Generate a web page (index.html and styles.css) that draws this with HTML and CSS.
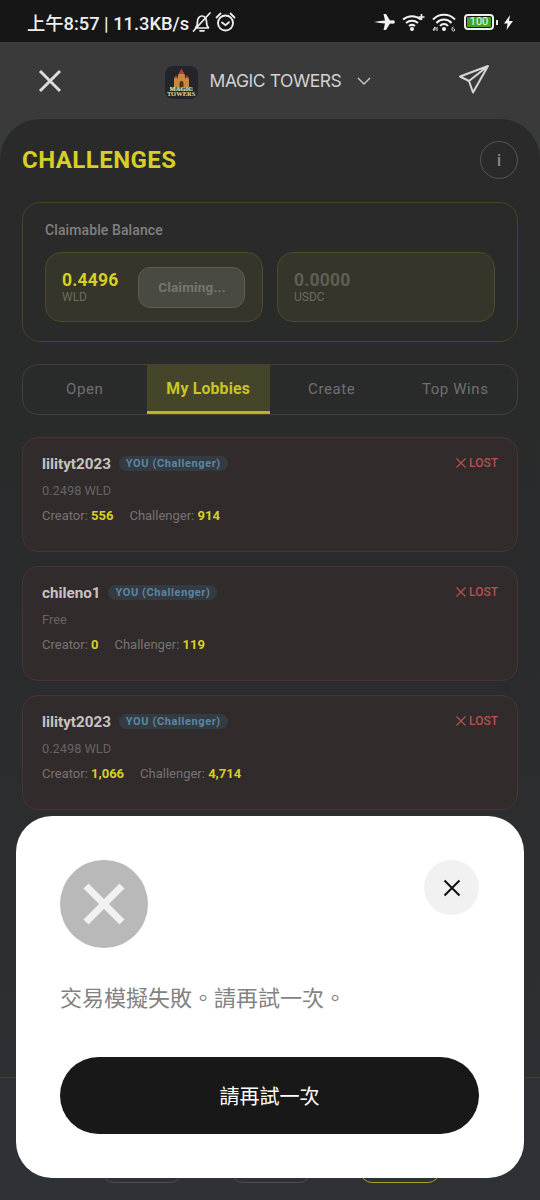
FILE: index.html
```html
<!DOCTYPE html>
<html lang="zh-Hant">
<head>
<meta charset="utf-8">
<title>Magic Towers</title>
<link rel="stylesheet" href="styles.css">
</head>
<body>
<div class="screen">
  <div class="status">
    <div class="status-left">
      <span class="clock">上午8:57 | 11.3KB/s</span>
      <svg class="st-ic" width="20" height="22" viewBox="0 0 20 22"><path d="M3.500 17c1.700-1.500 2-3 2-6.500 0-3 2-5.500 4.500-5.500s4.500 2.500 4.500 5.500c0 3.500.3 5 2 6.500zM8 19.800h4M1.500 20 18 2" fill="none" stroke="#eee" stroke-width="1.700" stroke-linecap="round" stroke-linejoin="round"/></svg>
      <svg class="st-ic" width="21" height="22" viewBox="0 0 21 22"><circle cx="10.500" cy="12" r="7.500" fill="none" stroke="#eee" stroke-width="1.900"/><path d="M7 11.500l3.500 2.700 3.500-3M1.500 6.500 5.500 2.500M19.500 6.500l-4-4" fill="none" stroke="#eee" stroke-width="1.800" stroke-linecap="round"/></svg>
    </div>
    <div class="status-right">
      <svg class="sr-plane" width="21" height="18" viewBox="0 0 21 18"><path d="M0 9 6 8l5-.5L9.500 1h2.500l4 6.500 3-.2c1.200 0 1.800.7 1.800 1.700s-.6 1.700-1.800 1.700l-3-.2-4 6.500H9.500L11 10.500 6 10z" fill="#f2f2f2"/></svg>
      <svg width="24" height="19" viewBox="0 0 24 19"><path d="M1 6.500a14 14 0 0 1 18 0M4 10a9.500 9.500 0 0 1 12 0M7 13a5 5 0 0 1 6 0" fill="none" stroke="#f2f2f2" stroke-width="2"/><circle cx="10" cy="16" r="2" fill="#f2f2f2"/><path d="M19.500 1v6M16.500 4h6" stroke="#f2f2f2" stroke-width="1.600"/></svg>
      <svg width="24" height="19" viewBox="0 0 24 19"><path d="M1 6.500a15 15 0 0 1 22 0M4.500 10a10 10 0 0 1 15 0M8 13a5 5 0 0 1 8 0" fill="none" stroke="#f2f2f2" stroke-width="2"/><circle cx="12" cy="16" r="2" fill="#f2f2f2"/><path d="M1 17l2-3v3zM5 14v4" stroke="#f2f2f2" stroke-width="1"/><path d="M21.500 14c-1 0-1.500.8-1.500 2s.5 2 1.500 2 1.200-.6 1.200-1.200-.5-1.100-1.200-1.100" fill="none" stroke="#f2f2f2" stroke-width="1"/></svg>
      <div class="battery"><div class="battery-fill">100</div></div>
      <div class="battery-nub"></div>
      <svg width="9" height="15" viewBox="0 0 9 15"><path d="M6 0 0 8.500h3.500L2.500 15 9 6H5z" fill="#f2f2f2"/></svg>
    </div>
  </div>

  <header class="topbar">
    <svg class="top-close" width="24" height="24" viewBox="0 0 24 24"><path d="M2 2l20 20M22 2 2 22" stroke="#dcdcdc" stroke-width="3" fill="none"/></svg>
    <div class="app">
      <div class="app-logo">
        <svg width="33" height="33" viewBox="0 0 33 33"><rect width="33" height="33" rx="8" fill="#23252b"/><path d="M5 22c4-3 19-3 23 0v3H5z" fill="#3f6f68"/><path d="M9 21v-8l2-3 2 3V9l3.500-5L20 9v4l2-3 2 3v8z" fill="#c78a3c"/><path d="M14.500 21v-4a2 2 0 0 1 4 0v4z" fill="#5b2d1f"/><path d="M16.500 2.500 13.500 8h6zM11 9l-2 3h4zM22 9l-2 3h4z" fill="#b13f33"/></svg>
        <span class="logo-t1">MAGIC</span><span class="logo-t2">TOWERS</span>
      </div>
      <span class="app-name">MAGIC TOWERS</span>
      <svg width="14" height="8" viewBox="0 0 14 8"><path d="M1 1l6 6 6-6" fill="none" stroke="#c8c8c8" stroke-width="1.400"/></svg>
    </div>
    <svg class="top-send" width="32" height="30" viewBox="0 0 32 30"><path d="M30 2 2 12.500l9 4.500 4 11.500zM30 2 11 17" fill="none" stroke="#d6d6d6" stroke-width="2" stroke-linejoin="round"/></svg>
  </header>

  <main class="panel">
    <div class="title-row">
      <h1 class="title">CHALLENGES</h1>
      <div class="info">i</div>
    </div>

    <section class="balance">
      <div class="balance-label">Claimable Balance</div>
      <div class="balance-row">
        <div class="token">
          <div class="token-text">
            <div class="amount">0.4496</div>
            <div class="unit">WLD</div>
          </div>
          <div class="claiming">Claiming...</div>
        </div>
        <div class="token">
          <div class="token-text">
            <div class="amount amount-zero">0.0000</div>
            <div class="unit">USDC</div>
          </div>
        </div>
      </div>
    </section>

    <nav class="tabs">
      <div class="tab">Open</div>
      <div class="tab tab-active">My Lobbies</div>
      <div class="tab">Create</div>
      <div class="tab">Top Wins</div>
    </nav>

    <div class="lobbies">
      <article class="lobby">
        <div class="lobby-head">
          <span class="lobby-name">lilityt2023</span>
          <span class="you">YOU (Challenger)</span>
          <span class="lost"><svg width="10" height="10" viewBox="0 0 10 10"><path d="M.5.500l9 9M9.500.500l-9 9" stroke="#b8504e" stroke-width="1.200"/></svg>LOST</span>
        </div>
        <div class="stake">0.2498 WLD</div>
        <div class="scores"><span>Creator: <b>556</b></span><span>Challenger: <b>914</b></span></div>
      </article>
      <article class="lobby">
        <div class="lobby-head">
          <span class="lobby-name">chileno1</span>
          <span class="you">YOU (Challenger)</span>
          <span class="lost"><svg width="10" height="10" viewBox="0 0 10 10"><path d="M.5.500l9 9M9.500.500l-9 9" stroke="#b8504e" stroke-width="1.200"/></svg>LOST</span>
        </div>
        <div class="stake">Free</div>
        <div class="scores"><span>Creator: <b>0</b></span><span>Challenger: <b>119</b></span></div>
      </article>
      <article class="lobby">
        <div class="lobby-head">
          <span class="lobby-name">lilityt2023</span>
          <span class="you">YOU (Challenger)</span>
          <span class="lost"><svg width="10" height="10" viewBox="0 0 10 10"><path d="M.5.500l9 9M9.500.500l-9 9" stroke="#b8504e" stroke-width="1.200"/></svg>LOST</span>
        </div>
        <div class="stake">0.2498 WLD</div>
        <div class="scores"><span>Creator: <b>1,066</b></span><span>Challenger: <b>4,714</b></span></div>
      </article>
    </div>

    <div class="bottom-nav">
      <div class="nav-pill"></div>
      <div class="nav-pill"></div>
      <div class="nav-pill nav-pill-on"></div>
    </div>
  </main>

  <div class="modal">
    <div class="modal-top">
      <div class="fail-icon"><svg width="44" height="44" viewBox="0 0 44 44"><path d="M4 4l36 36M40 4 4 40" stroke="#f1f1f1" stroke-width="7" fill="none"/></svg></div>
      <div class="modal-close"><svg width="18" height="18" viewBox="0 0 18 18"><path d="M1.500 1.500l15 15M16.500 1.500l-15 15" stroke="#111" stroke-width="2" fill="none"/></svg></div>
    </div>
    <p class="modal-text">交易模擬失敗。請再試一次。</p>
    <div class="modal-btn">請再試一次</div>
  </div>
</div>
</body>
</html>
```
FILE: styles.css
```css
* { box-sizing: border-box; margin: 0; padding: 0; }
html, body { width: 540px; height: 1200px; overflow: hidden; background: #161616; }
body { font-family: Roboto, "Noto Sans CJK TC", sans-serif; }
.screen { position: relative; width: 540px; height: 1200px; display: flex; flex-direction: column; overflow: hidden; background: #393a3a; }

.status { height: 42px; flex: none; background: #161616; display: flex; justify-content: space-between; align-items: center; padding: 2px 27px 0 27px; }
.status-left { display: flex; align-items: center; gap: 3px; }
.clock { font-family: Roboto, "Noto Sans CJK TC", sans-serif; font-size: 18.300px; font-weight: 500; color: #eeeeee; }
.st-ic { display: block; }
.status-right { display: flex; align-items: center; gap: 6px; }
.sr-plane { margin-right: 1px; }
.battery { width: 30px; height: 16px; border: 2px solid #f0f0f0; border-radius: 4px; padding: 1px; margin-left: 2px; }
.battery-fill { height: 100%; background: #46a51c; border-radius: 1px; color: #f4f4f4; font-size: 11px; line-height: 10px; text-align: center; }
.battery-nub { width: 2px; height: 5px; background: #e8e8e8; margin-left: -4px; margin-right: 0; }

.topbar { height: 77px; flex: none; display: flex; align-items: center; justify-content: space-between; padding: 0 50px 0 38px; background: #3a3a3a; }
.top-close { display: block; }
.top-send { display: block; margin-top: -4px; }
.app { display: flex; align-items: center; gap: 12px; margin-left: 16px; }
.app-logo { position: relative; width: 33px; height: 33px; margin-top: 3px; }
.app-logo svg { display: block; }
.logo-t1, .logo-t2 { position: absolute; left: 0; width: 33px; text-align: center; font-family: "Liberation Serif", serif; font-size: 6.500px; line-height: 6px; font-weight: 700; color: #e9d9a0; }
.logo-t1 { top: 20px; }
.logo-t2 { top: 25px; }
.app-name { font-family: Inter, sans-serif; font-size: 17.500px; letter-spacing: -0.45px; color: #d2d2d2; margin-right: 4px; }

.panel { position: relative; flex: 1; min-height: 0; padding: 0 22px; border-radius: 40px 40px 0 0; background: linear-gradient(180deg, #2a2a2a 0, #2a2b2c 50%, #2e3236 100%); }
.title-row { display: flex; align-items: center; justify-content: space-between; height: 83px; padding-bottom: 1px; }
.title { font-size: 24px; font-weight: 700; color: #d8ce26; letter-spacing: 0.45px; }
.info { width: 38px; height: 38px; border: 1px solid #555; border-radius: 50%; display: flex; align-items: center; justify-content: center; color: #8a8a8a; font-size: 16px; font-weight: 500; }

.balance { height: 140px; border: 1px solid #45452a; border-radius: 18px; padding: 19px 22px 0; }
.balance-label { font-size: 14px; font-weight: 500; letter-spacing: 0.1px; color: #808080; line-height: 17px; }
.balance-row { display: grid; grid-template-columns: 1fr 1fr; gap: 14px; margin-top: 13px; }
.token { height: 70px; border: 1px solid #4b4b2e; border-radius: 16px; background: #353529; display: flex; align-items: center; padding: 0 16px; gap: 20px; }
.amount { font-size: 17.500px; font-weight: 700; color: #d6d024; line-height: 20px; letter-spacing: 0.2px; }
.amount-zero { color: #5f5f56; }
.unit { font-size: 12px; color: #6b6b62; line-height: 15px; }
.claiming { width: 107px; height: 41px; border: 1px solid #5c5d4c; border-radius: 12px; background: #494a42; color: #767670; font-size: 13.500px; font-weight: 700; letter-spacing: 0.2px; display: flex; align-items: center; justify-content: center; }

.tabs { margin-top: 22px; height: 51px; border: 1px solid #414233; border-radius: 16px; display: grid; grid-template-columns: repeat(4, 1fr); overflow: hidden; }
.tab { display: flex; align-items: center; justify-content: center; font-size: 15px; letter-spacing: 0.6px; color: #707070; padding-bottom: 2px; }
.tab-active { background: #45452a; color: #c9c524; font-size: 15.800px; font-weight: 700; letter-spacing: 0.2px; border-bottom: 3px solid #b9b422; padding-bottom: 0; }

.lobbies { margin-top: 22px; display: flex; flex-direction: column; gap: 14px; }
.lobby { height: 115px; border: 1px solid #4a3434; border-radius: 16px; background: #322b2b; padding: 14px 19px 0; }
.lobby-head { display: flex; align-items: center; gap: 8px; height: 23px; }
.lobby-name { font-size: 15.200px; font-weight: 700; color: #c4c4c4; }
.you { height: 15px; padding: 0 7px; border-radius: 8px; background: #343b42; color: #5b86a4; font-size: 11px; font-weight: 700; letter-spacing: 0.6px; line-height: 15px; }
.lost { margin-left: auto; margin-bottom: 2px; display: flex; align-items: center; gap: 3px; color: #b8504e; font-size: 12px; font-weight: 500; }
.lost svg { display: block; }
.stake { margin-top: 8px; font-size: 12.800px; color: #656565; line-height: 16px; }
.scores { margin-top: 8px; display: flex; gap: 16px; font-size: 13px; color: #747474; line-height: 17px; }
.scores b { color: #d6d024; font-weight: 700; }

.bottom-nav { position: absolute; left: 0; right: 0; bottom: 0; height: 123px; border-top: 1px solid #414233; background: #2e3236; display: flex; justify-content: center; align-items: flex-end; gap: 49px; padding: 0 0 17px 2px; }
.nav-pill { width: 80px; height: 40px; border: 1px solid #4c4f50; border-radius: 12px; }
.nav-pill-on { border: 1.500px solid #a5a02a; }

.modal { position: absolute; left: 16px; top: 816px; width: 507.500px; height: 362px; border-radius: 36px; background: #ffffff; padding: 44px 44.500px 44px 44px; }
.modal-top { display: flex; justify-content: space-between; align-items: flex-start; }
.fail-icon { width: 88px; height: 88px; border-radius: 50%; background: #b9b9b9; display: flex; align-items: center; justify-content: center; }
.fail-icon svg, .modal-close svg { display: block; }
.modal-close { width: 55px; height: 55px; border-radius: 50%; background: #f1f1f1; display: flex; align-items: center; justify-content: center; }
.modal-text { margin-top: 32px; font-family: "Noto Sans CJK TC", sans-serif; font-size: 22px; line-height: 32px; color: #828282; }
.modal-btn { margin-top: 45px; height: 77px; border-radius: 39px; background: #181818; color: #fff; font-family: "Noto Sans CJK TC", sans-serif; font-size: 20px; display: flex; align-items: center; justify-content: center; }
```
